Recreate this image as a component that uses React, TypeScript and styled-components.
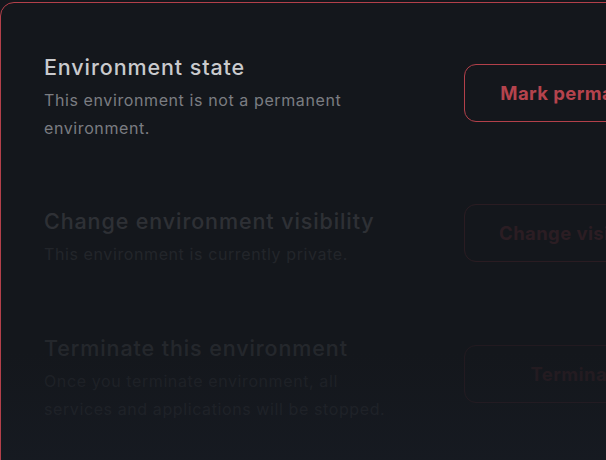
import React from "react";
import styled, { createGlobalStyle } from "styled-components";

const Global = createGlobalStyle`
  html, body { margin: 0; padding: 0; background: #14171c; overflow: hidden; }
  body { font-family: Inter, "Noto Sans", sans-serif; }
`;

const Page = styled.div`
  width: 606px;
  height: 460px;
  overflow: hidden;
  padding-top: 2px;
  box-sizing: border-box;
  background: #14171c;
`;

const Card = styled.section`
  width: 750px;
  box-sizing: border-box;
  border: 1.5px solid #b3404a;
  border-radius: 14px;
  background: linear-gradient(180deg, #14171c 0%, #14171c 70%, #171b23 100%);
  padding: 50px 44px 80px 43px;
  display: flex;
  flex-direction: column;
`;

const Row = styled.div<{ $fade: number; $space: number }>`
  display: grid;
  grid-template-columns: 420px 228px;
  align-items: center;
  margin-top: ${(p) => p.$space}px;
  opacity: ${(p) => p.$fade};
`;

const Text = styled.div`
  display: flex;
  flex-direction: column;
  gap: 5px;
  max-width: 352px;
`;

const Title = styled.h3`
  margin: 0;
  font-size: 21.5px;
  line-height: 28px;
  font-weight: 500;
  color: #c9cacd;
  letter-spacing: 0.9px;
`;

const Desc = styled.p`
  margin: 0;
  font-size: 16px;
  line-height: 28px;
  color: #7b7d82;
  letter-spacing: 0.6px;
`;

const Button = styled.button`
  width: 228px;
  height: 58px;
  margin: -5px 0 5px;
  border: 1.5px solid #b3404a;
  border-radius: 12px;
  background: transparent;
  color: #b5434d;
  font-family: Inter, "Noto Sans", sans-serif;
  font-size: 18.5px;
  font-weight: 700;
  letter-spacing: 0.4px;
  white-space: nowrap;
  cursor: pointer;
`;

const rows = [
  {
    title: "Environment state",
    desc: "This environment is not a permanent environment.",
    action: "Mark permanent",
    fade: 1,
    space: 0,
  },
  {
    title: "Change environment visibility",
    desc: "This environment is currently private.",
    action: "Change visibility",
    fade: 0.14,
    space: 65,
  },
  {
    title: "Terminate this environment",
    desc: "Once you terminate environment, all services and applications will be stopped.",
    action: "Terminate",
    fade: 0.09,
    space: 66,
  },
];

export default function App() {
  return (
    <Page>
      <Global />
      <Card>
        {rows.map((r) => (
          <Row key={r.title} $fade={r.fade} $space={r.space}>
            <Text>
              <Title>{r.title}</Title>
              <Desc>{r.desc}</Desc>
            </Text>
            <Button>{r.action}</Button>
          </Row>
        ))}
      </Card>
    </Page>
  );
}
